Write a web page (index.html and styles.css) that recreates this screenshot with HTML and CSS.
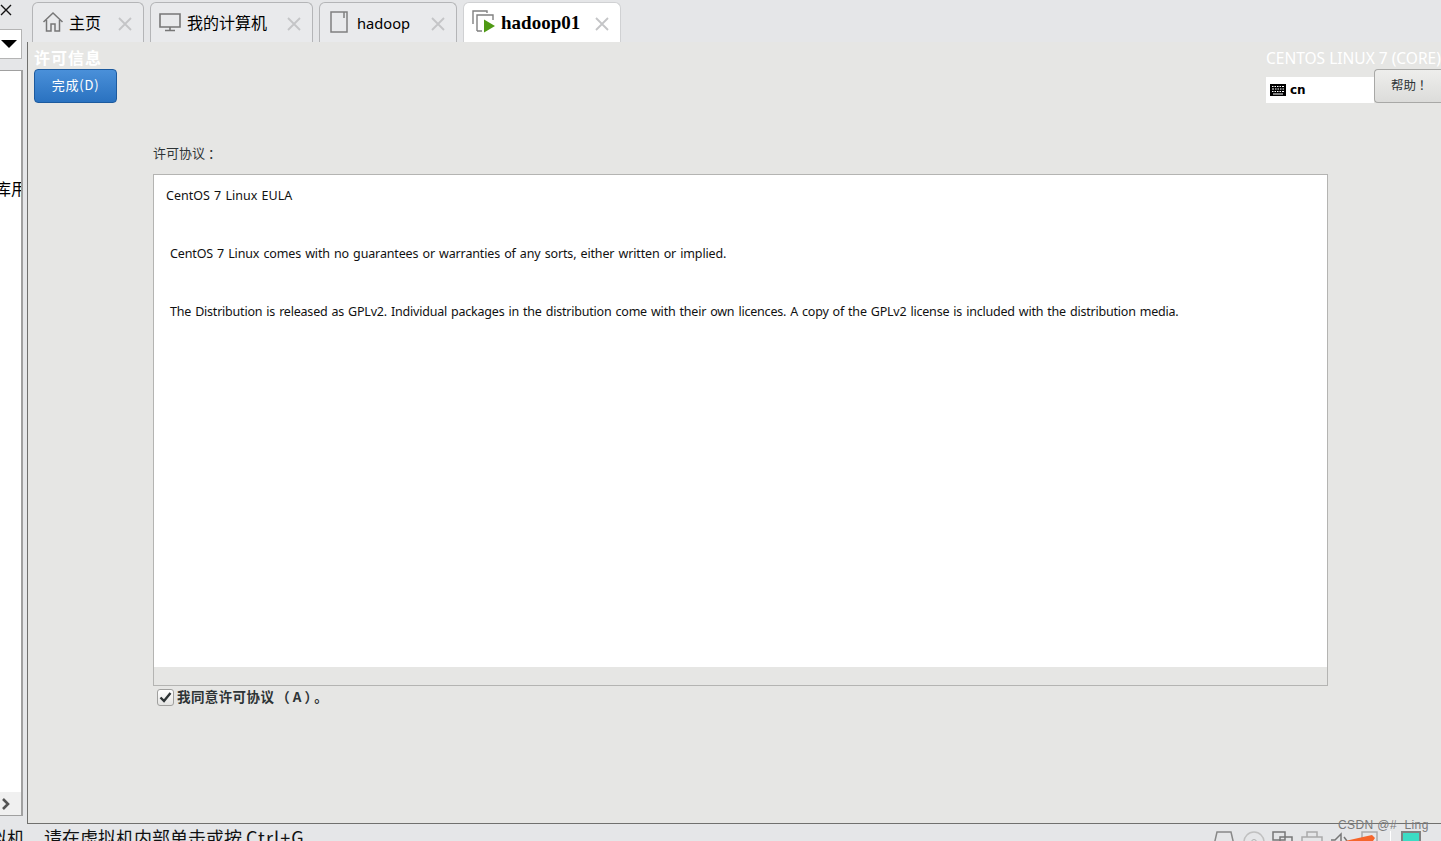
FILE: index.html
```html
<!DOCTYPE html>
<html lang="zh">
<head>
<meta charset="utf-8">
<title>hadoop01</title>
<link rel="stylesheet" href="styles.css">
</head>
<body>
<div class="app">
  <div class="workspace">
    <aside class="sidebar">
      <div class="side-close"><svg width="12" height="12" viewBox="0 0 12 12"><path d="M1 1l10 10M11 1L1 11" stroke="#111" stroke-width="1.4" fill="none"/></svg></div>
      <div class="side-select"><span class="caret"></span></div>
      <div class="side-list">
        <div class="side-text">库用</div>
        <div class="side-scroll"><svg width="10" height="12" viewBox="0 0 10 12"><path d="M2 1l5 5-5 5" stroke="#555" stroke-width="2.6" fill="none"/></svg></div>
      </div>
    </aside>
    <div class="right">
      <nav class="tabs">
        <div class="tab tab-home">
          <svg class="ticon" width="22" height="22" viewBox="0 0 22 22"><path d="M1.5 11L11 2l9.500 9M4.500 9v11h4.500v-7h4v7h4.500V9" fill="none" stroke="#777" stroke-width="1.500"/></svg>
          <span class="tlabel">主页</span>
          <svg class="tclose" width="16" height="16" viewBox="0 0 16 16"><path d="M2 2l12 12M14 2L2 14" stroke="#c4c5c7" stroke-width="1.800"/></svg>
        </div>
        <div class="tab tab-pc">
          <svg class="ticon" width="22" height="20" viewBox="0 0 22 20"><path d="M1 2h20v13H1zM11 15v3M6 18.500h10" fill="none" stroke="#777" stroke-width="1.600"/></svg>
          <span class="tlabel">我的计算机</span>
          <svg class="tclose" width="16" height="16" viewBox="0 0 16 16"><path d="M2 2l12 12M14 2L2 14" stroke="#c4c5c7" stroke-width="1.800"/></svg>
        </div>
        <div class="tab tab-vm">
          <svg class="ticon" width="18" height="22" viewBox="0 0 18 22"><path d="M1 1h16v20H1zM14 1v6" fill="none" stroke="#808080" stroke-width="1.500"/></svg>
          <span class="tlabel">hadoop</span>
          <svg class="tclose" width="16" height="16" viewBox="0 0 16 16"><path d="M2 2l12 12M14 2L2 14" stroke="#c4c5c7" stroke-width="1.800"/></svg>
        </div>
        <div class="tab tab-active">
          <svg class="ticon" width="24" height="24" viewBox="0 0 24 24"><path d="M1 14V1h14v2M5 21V5h16v5M5 21h5" fill="none" stroke="#808080" stroke-width="1.400"/><path d="M12 9.500l11 6.500-11 6.500z" fill="#4f9a14"/></svg>
          <span class="tlabel tlabel-active">hadoop01</span>
          <svg class="tclose" width="16" height="16" viewBox="0 0 16 16"><path d="M2 2l12 12M14 2L2 14" stroke="#c4c5c7" stroke-width="1.800"/></svg>
        </div>
      </nav>
      <main class="guest">
        <header class="guest-head">
          <div class="head-left">
            <div class="spoke-title">许可信息</div>
            <button class="done">完成(D)</button>
          </div>
          <div class="head-right">
            <div class="product">CENTOS LINUX 7 (CORE)</div>
            <div class="head-controls">
              <div class="kbd">
                <svg width="16" height="12" viewBox="0 0 16 12"><rect width="16" height="12" fill="#000"/><path d="M2 2.500h1.500M4.500 2.500H6M7 2.500h1.500M9.500 2.500H11M12 2.500h2M2 5h2M5 5h1.500M7.500 5H9M10 5h1.500M12.500 5H14M2 7.500h1.500M4.500 7.500H6M7 7.500h1.500M9.500 7.500H11M12 7.500h2M3 10h10" stroke="#fff" stroke-width="1.200"/></svg>
                <span>cn</span>
              </div>
              <button class="help">帮助 ！</button>
            </div>
          </div>
        </header>
        <section class="license">
          <div class="license-label">许可协议 ：</div>
          <div class="license-box">
            <div class="license-text">
              <p class="eula-title">CentOS 7 Linux EULA</p>
              <p class="eula-para eula-short">CentOS 7 Linux comes with no guarantees or warranties of any sorts, either written or implied.</p>
              <p class="eula-para eula-long">The Distribution is released as GPLv2. Individual packages in the distribution come with their own licences. A copy of the GPLv2 license is included with the distribution media.</p>
            </div>
            <div class="license-foot"></div>
          </div>
          <label class="agree">
            <span class="check"><svg width="13" height="11" viewBox="0 0 13 11"><path d="M1.500 5.500l3.500 3.500 6.500-8" fill="none" stroke="#2e3436" stroke-width="2.400"/></svg></span>
            <span class="agree-text">我同意许可协议<span class="agree-tail">（A）。</span></span>
          </label>
        </section>
      </main>
    </div>
  </div>
  <footer class="status">
    <div class="hint"><span class="hint-a">拟机</span><span class="hint-b">请在虚拟机内部单击或按 <span class="hint-key">Ctrl+G</span></span></div>
    <div class="tray">
      <svg width="24" height="14" viewBox="0 0 24 14"><path d="M2 14L5 1h14l3 13" fill="none" stroke="#888" stroke-width="1.500"/></svg>
      <svg width="22" height="14" viewBox="0 0 22 14"><circle cx="11" cy="11" r="10" fill="none" stroke="#c0c0c0" stroke-width="1.500"/><circle cx="11" cy="11" r="2.500" fill="none" stroke="#b0b0b0"/></svg>
      <svg width="22" height="14" viewBox="0 0 22 14"><path d="M1 1h12v8H1zM8 6h12v8H8z" fill="#e5e6e8" stroke="#777" stroke-width="1.500"/></svg>
      <svg width="22" height="14" viewBox="0 0 22 14"><path d="M6 6V1h10v5M1 14V6h20v8" fill="none" stroke="#aaa" stroke-width="1.500"/></svg>
      <svg width="22" height="14" viewBox="0 0 22 14"><path d="M1 9h4l6-6v11M14 6l3 4" fill="none" stroke="#777" stroke-width="1.500"/></svg>
      <svg class="tray-disk" width="18" height="14" viewBox="0 0 18 14"><path d="M1 1h15v13H1z" fill="none" stroke="#aaa" stroke-width="1.500"/></svg>
      <span class="tray-sep"></span>
      <span class="tray-vm"></span>
    </div>
    <svg class="arrow" width="30" height="6" viewBox="0 0 30 6"><path d="M0 6L27 0l3 3-2 3z" fill="#f5652b"/></svg>
  </footer>
  <div class="watermark">CSDN @#&nbsp; Ling</div>
</div>
</body>
</html>
```
FILE: styles.css
```css
* { box-sizing: border-box; }
html, body { margin: 0; padding: 0; height: 100%; overflow: hidden; background: #e5e6e8; }
body { font-family: "Noto Sans", "Noto Sans CJK SC", sans-serif; color: #000; }
.app { width: 1441px; height: 841px; display: flex; flex-direction: column; overflow: hidden; position: relative; }
.workspace { height: 824px; display: flex; flex: none; }

.sidebar { width: 23px; flex: none; display: flex; flex-direction: column; background: #e5e6e8; }
.side-close { height: 29px; padding: 4px 0 0 0; line-height: 0; }
.side-select { height: 30px; width: 22px; background: #fff; border: 1px solid #b4b4b4; border-left: 0; display: flex; align-items: center; padding-left: 1px; }
.caret { width: 0; height: 0; border-left: 8px solid transparent; border-right: 8px solid transparent; border-top: 8px solid #000; }
.side-list { margin-top: 11px; height: 746px; width: 23px; background: #fff; border: 1px solid #a0a0a0; border-left: 0; border-right: 2px solid #a0a0a0; display: flex; flex-direction: column; overflow: hidden; }
.side-text { margin: 106px 0 0 -5px; height: 22px; font-size: 16px; line-height: 22px; white-space: nowrap; font-family: "Noto Sans CJK SC", sans-serif; width: 60px; }
.side-scroll { margin-top: auto; height: 23px; background: #f0f0f0; display: flex; align-items: center; padding-left: 1px; }

.right { flex: 1; min-width: 0; display: flex; flex-direction: column; }
.tabs { height: 42px; flex: none; display: flex; gap: 6px; padding: 2px 0 0 9px; background: #e5e6e8; }
.tab { height: 40px; border: 1px solid #b4b5b7; border-bottom: 0; border-radius: 6px 6px 0 0; background: #e9eaec; display: flex; align-items: center; position: relative; padding-bottom: 2px; }
.tab-home { width: 112px; padding-left: 9px; }
.tab-home .tlabel { margin-left: 5px; }
.tab-pc { width: 163px; padding-left: 8px; }
.tab-vm { width: 138px; padding-left: 10px; }
.tab-active { width: 158px; padding-left: 8px; background: #fff; border-color: #d0d1d3; }
.ticon { flex: none; }
.tlabel { font-size: 16px; margin-left: 6px; white-space: nowrap; font-family: "Noto Sans", "Noto Sans CJK SC", sans-serif; }
.tab-vm .tlabel { margin: 2px 0 0 9px; font-size: 14.700px; }
.tlabel-active { font-family: "Liberation Serif", serif; font-weight: bold; font-size: 19px; margin: 2px 0 0 5px; }
.tclose { position: absolute; right: 10px; top: 13px; }

.guest { flex: 1; min-height: 0; background: #e6e6e4; border-left: 1px solid #70706e; border-bottom: 1px solid #70706e; margin-left: 4px; display: flex; flex-direction: column; }
.guest-head { display: flex; justify-content: space-between; height: 62px; padding: 0 0 0 6px; flex: none; }
.head-left { display: flex; flex-direction: column; padding-top: 5px; }
.spoke-title { height: 22px; font-size: 16px; line-height: 21px; font-weight: bold; color: #fff; letter-spacing: 1px; font-family: "Noto Sans CJK SC", sans-serif; }
.done { width: 83px; height: 34px; border: 1px solid #1c5a9e; border-radius: 4px; background: linear-gradient(#4a90d9, #2a72c0); color: #fff; font: 13px "Noto Sans CJK SC", sans-serif; padding: 0 0 3px; letter-spacing: .8px; }
.head-right { width: 175px; display: flex; flex-direction: column; padding-top: 6px; overflow: hidden; flex: none; }
.product { height: 21px; font-size: 15.500px; line-height: 21px; color: #fff; white-space: nowrap; }
.head-controls { display: flex; margin-top: 0; height: 34px; align-items: flex-end; }
.kbd { width: 108px; height: 26px; background: #fff; display: flex; align-items: center; gap: 4px; padding: 0 0 1px 4px; font: bold 12px "DejaVu Sans", sans-serif; flex: none; }
.help { width: 67px; height: 34px; flex: none; border: 1px solid #a8a8a6; border-right: 0; border-radius: 4px 0 0 4px; background: linear-gradient(#eeeeec, #dcdcda); font: 12.500px "Noto Sans CJK SC", sans-serif; padding: 0 0 4px 16px; color: #2e3436; text-align: left; white-space: pre; }

.license { flex: 1; display: flex; flex-direction: column; padding: 39px 0 0 125px; }
.license-label { height: 20px; font-size: 13px; line-height: 20px; color: #2e3436; font-family: "Noto Sans CJK SC", sans-serif; white-space: pre; }
.license-box { margin-top: 11px; width: 1175px; height: 512px; flex: none; border: 1px solid #b4b4b2; display: flex; flex-direction: column; background: #e6e6e4; }
.license-text { height: 492px; flex: none; background: #fff; padding: 11px 0 0 12px; font-size: 12.500px; line-height: 20px; color: #111; word-spacing: 1px; }
.license-text p { margin: 0; white-space: nowrap; }
.eula-para { margin-top: 38px !important; padding-left: 4px; }
.eula-short { letter-spacing: -.14px; }
.eula-long { letter-spacing: -.21px; }
.license-foot { flex: 1; }
.agree { display: flex; align-items: center; gap: 3px; margin: 2px 0 0 4px; height: 18px; font: bold 13.500px "Noto Sans CJK SC", sans-serif; letter-spacing: .4px; color: #2e3436; }
.agree-text { padding-bottom: 3px; }
.agree-tail { letter-spacing: 3px; margin-left: 2px; }
.check { width: 17px; height: 17px; border: 1px solid #a0a09e; border-radius: 3px; background: linear-gradient(#fff, #e4e4e2); display: flex; align-items: center; justify-content: center; }

.status { height: 17px; flex: none; position: relative; display: flex; justify-content: space-between; background: #e5e6e8; overflow: hidden; }
.hint { font: 18px/24px "Noto Sans CJK SC", sans-serif; white-space: nowrap; padding-top: 1px; color: #111; display: flex; margin-left: -11px; }
.hint-b { margin-left: 19px; }
.hint-key { letter-spacing: 1.100px; }
.tray { display: flex; gap: 7px; align-items: flex-start; padding: 7px 20px 0 0; }
.tray-disk { margin-left: 2px; }
.tray-sep { width: 1px; height: 14px; background: #fff; margin-left: 4px; }
.tray-vm { width: 20px; height: 14px; background: #3cdcc4; border: 2px solid #808080; border-bottom: 0; margin-left: 3px; }
.arrow { position: absolute; left: 1345px; top: 11px; }
.watermark { position: absolute; left: 1338px; top: 817px; font: 12px/16px "Liberation Sans", sans-serif; color: #7a7a7a; letter-spacing: .4px; }
```
